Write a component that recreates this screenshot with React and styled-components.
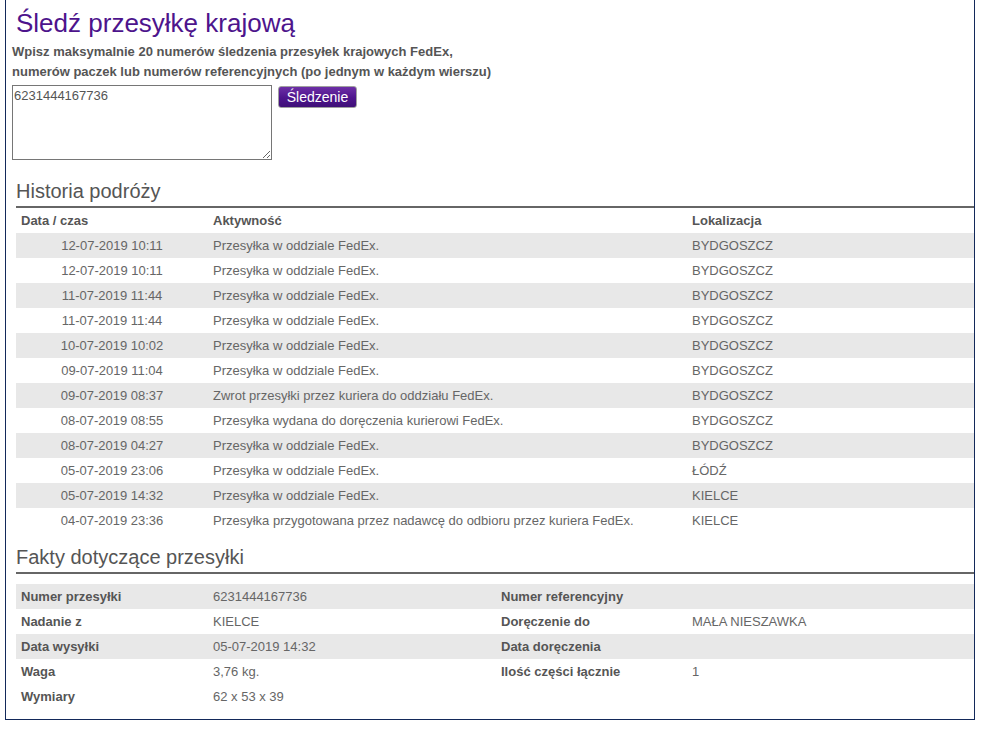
import React from 'react';
import styled, { createGlobalStyle } from "styled-components";

const Global = createGlobalStyle`
  body {
    margin: 0;
    background: #fff;
    font-family: "Liberation Sans", Arial, sans-serif;
  }
`;

const history = [
    ["12-07-2019 10:11", "Przesyłka w oddziale FedEx.", "BYDGOSZCZ"],
    ["12-07-2019 10:11", "Przesyłka w oddziale FedEx.", "BYDGOSZCZ"],
    ["11-07-2019 11:44", "Przesyłka w oddziale FedEx.", "BYDGOSZCZ"],
    ["11-07-2019 11:44", "Przesyłka w oddziale FedEx.", "BYDGOSZCZ"],
    ["10-07-2019 10:02", "Przesyłka w oddziale FedEx.", "BYDGOSZCZ"],
    ["09-07-2019 11:04", "Przesyłka w oddziale FedEx.", "BYDGOSZCZ"],
    ["09-07-2019 08:37", "Zwrot przesyłki przez kuriera do oddziału FedEx.", "BYDGOSZCZ"],
    ["08-07-2019 08:55", "Przesyłka wydana do doręczenia kurierowi FedEx.", "BYDGOSZCZ"],
    ["08-07-2019 04:27", "Przesyłka w oddziale FedEx.", "BYDGOSZCZ"],
    ["05-07-2019 23:06", "Przesyłka w oddziale FedEx.", "ŁÓDŹ"],
    ["05-07-2019 14:32", "Przesyłka w oddziale FedEx.", "KIELCE"],
    ["04-07-2019 23:36", "Przesyłka przygotowana przez nadawcę do odbioru przez kuriera FedEx.", "KIELCE"],
];

const facts = [
    ["Numer przesyłki", "6231444167736", "Numer referencyjny", "", true],
    ["Nadanie z", "KIELCE", "Doręczenie do", "MAŁA NIESZAWKA", false],
    ["Data wysyłki", "05-07-2019 14:32", "Data doręczenia", "", true],
    ["Waga", "3,76 kg.", "Ilość części łącznie", "1", false],
    ["Wymiary", "62 x 53 x 39", "", "", false],
];

const App = () => {
    return (
        <Frame>
            <Global/>
            <Title>Śledź przesyłkę krajową</Title>
            <Intro>
                Wpisz maksymalnie 20 numerów śledzenia przesyłek krajowych FedEx,<br/>
                numerów paczek lub numerów referencyjnych (po jednym w każdym wierszu)
            </Intro>
            <Form>
                <Numbers defaultValue="6231444167736"/>
                <TrackButton>Śledzenie</TrackButton>
            </Form>

            <Section>
                <Heading>Historia podróży</Heading>
                <Table>
                    <colgroup>
                        <col style={{width: 192}}/>
                        <col style={{width: 479}}/>
                        <col/>
                    </colgroup>
                    <thead>
                    <tr>
                        <Th>Data / czas</Th>
                        <Th>Aktywność</Th>
                        <Th>Lokalizacja</Th>
                    </tr>
                    </thead>
                    <tbody>
                    {history.map((r, i) => (
                        <Row key={i} $shade={i % 2 === 0}>
                            <Td $center>{r[0]}</Td>
                            <Td>{r[1]}</Td>
                            <Td>{r[2]}</Td>
                        </Row>
                    ))}
                    </tbody>
                </Table>
            </Section>

            <Section $facts>
                <Heading>Fakty dotyczące przesyłki</Heading>
                <Table $facts>
                    <colgroup>
                        <col style={{width: 192}}/>
                        <col style={{width: 288}}/>
                        <col style={{width: 191}}/>
                        <col/>
                    </colgroup>
                    <tbody>
                    {facts.map((r, i) => (
                        <Row key={i} $shade={r[4]}>
                            <Label>{r[0]}</Label>
                            <Td>{r[1]}</Td>
                            <Label>{r[2]}</Label>
                            <Td>{r[3]}</Td>
                        </Row>
                    ))}
                    </tbody>
                </Table>
            </Section>
        </Frame>
    );
};

const Frame = styled.div`
  box-sizing: border-box;
  width: 970px;
  margin-left: 5px;
  border: 1px solid #13295a;
  border-top: none;
  padding: 5px 0 10px 6px;
`

const Title = styled.h1`
  margin: 0 0 0 4px;
  font-size: 26px;
  line-height: 36px;
  font-weight: 400;
  color: #4d148c;
`

const Intro = styled.p`
  margin: 1px 0 0 0;
  font-size: 13px;
  line-height: 20px;
  font-weight: 700;
  color: #555;
`

const Form = styled.div`
  display: flex;
  align-items: flex-start;
  gap: 6px;
  margin-top: 3px;
`

const Numbers = styled.textarea`
  box-sizing: border-box;
  width: 260px;
  height: 75px;
  margin: 0;
  padding: 2px 2px 2px 1px;
  border: 1px solid #767676;
  font-family: "Liberation Sans", Arial, sans-serif;
  font-size: 13px;
  color: #555;
  resize: both;
  outline: none;
`

const TrackButton = styled.button`
  box-sizing: border-box;
  width: 79px;
  height: 22px;
  margin-top: 1px;
  padding: 0;
  border: 1px solid #a0a0a0;
  border-radius: 3px;
  background: linear-gradient(#6d2fa6, #4d148c 55%, #3f0f78);
  color: #fff;
  font-family: "Liberation Sans", Arial, sans-serif;
  font-size: 14px;
  cursor: pointer;
`

const Section = styled.div`
  margin: ${p => p.$facts ? "12px" : "19px"} 0 0 4px;
`

const Heading = styled.h2`
  margin: 0;
  padding-bottom: 3px;
  font-size: 20px;
  line-height: 24px;
  font-weight: 400;
  color: #555;
  border-bottom: 2px solid #666;
`

const Table = styled.table`
  width: 100%;
  border-collapse: collapse;
  margin-top: ${p => p.$facts ? "10px" : "0"};
  font-size: 13px;
  color: #666;
`

const Th = styled.th`
  height: 25px;
  padding: 0 5px;
  text-align: left;
  font-weight: 700;
  color: #555;
`

const Row = styled.tr`
  height: 25px;
  background: ${p => p.$shade ? "#e8e8e8" : "#fff"};
`

const Td = styled.td`
  padding: 0 5px;
  text-align: ${p => p.$center ? "center" : "left"};
  white-space: nowrap;
`

const Label = styled.td`
  padding: 0 5px;
  font-weight: 700;
  color: #555;
  white-space: nowrap;
`

export default App;
